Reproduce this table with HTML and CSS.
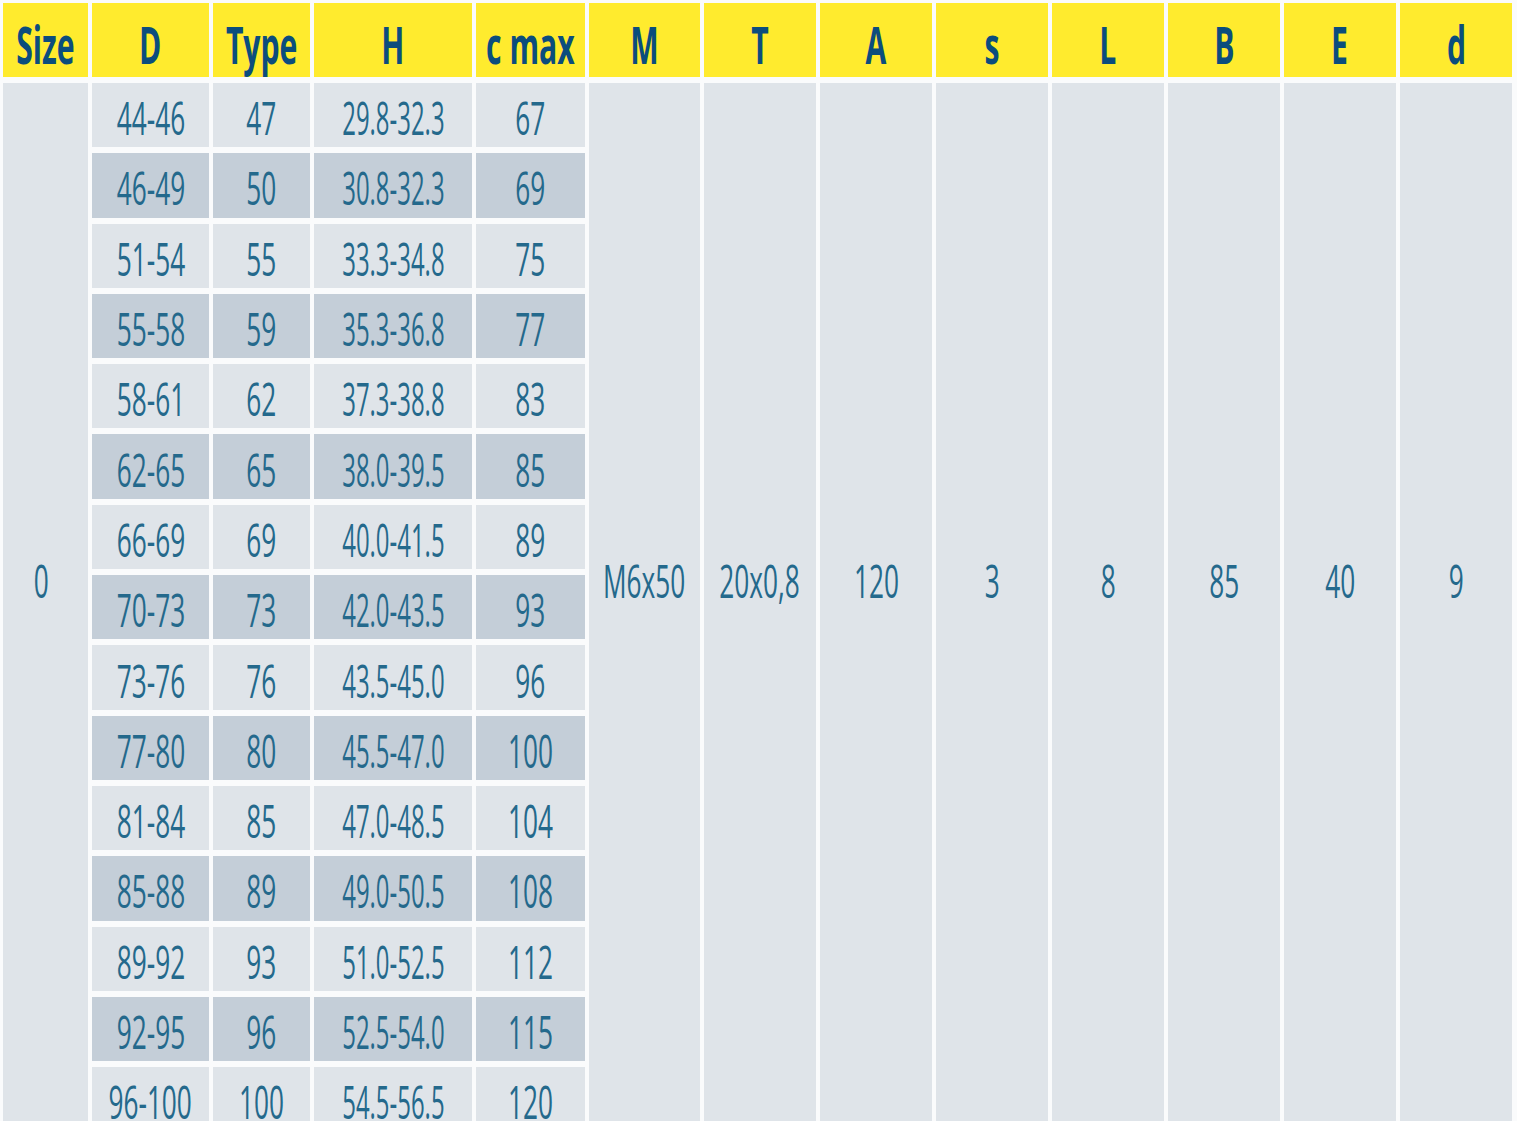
FILE: index.html
```html
<!DOCTYPE html>
<html>
<head>
<meta charset="utf-8">
<link rel="stylesheet" href="styles.css">
</head>
<body>
<div class="table">
  <div class="hd"><span>Size</span></div>
  <div class="hd"><span>D</span></div>
  <div class="hd"><span>Type</span></div>
  <div class="hd"><span>H</span></div>
  <div class="hd"><span>c max</span></div>
  <div class="hd"><span>M</span></div>
  <div class="hd"><span>T</span></div>
  <div class="hd"><span>A</span></div>
  <div class="hd"><span>s</span></div>
  <div class="hd"><span>L</span></div>
  <div class="hd"><span>B</span></div>
  <div class="hd"><span>E</span></div>
  <div class="hd"><span>d</span></div>

  <div class="span c1 size"><span>0</span></div>
  <div class="span c6"><span>M6x50</span></div>
  <div class="span c7"><span>20x0,8</span></div>
  <div class="span c8"><span>120</span></div>
  <div class="span c9"><span>3</span></div>
  <div class="span c10"><span>8</span></div>
  <div class="span c11"><span>85</span></div>
  <div class="span c12"><span>40</span></div>
  <div class="span c13"><span>9</span></div>

  <div class="cell"><span>44-46</span></div><div class="cell"><span>47</span></div><div class="cell h"><span>29.8-32.3</span></div><div class="cell"><span>67</span></div>
  <div class="cell dk"><span>46-49</span></div><div class="cell dk"><span>50</span></div><div class="cell dk h"><span>30.8-32.3</span></div><div class="cell dk"><span>69</span></div>
  <div class="cell"><span>51-54</span></div><div class="cell"><span>55</span></div><div class="cell h"><span>33.3-34.8</span></div><div class="cell"><span>75</span></div>
  <div class="cell dk"><span>55-58</span></div><div class="cell dk"><span>59</span></div><div class="cell dk h"><span>35.3-36.8</span></div><div class="cell dk"><span>77</span></div>
  <div class="cell"><span>58-61</span></div><div class="cell"><span>62</span></div><div class="cell h"><span>37.3-38.8</span></div><div class="cell"><span>83</span></div>
  <div class="cell dk"><span>62-65</span></div><div class="cell dk"><span>65</span></div><div class="cell dk h"><span>38.0-39.5</span></div><div class="cell dk"><span>85</span></div>
  <div class="cell"><span>66-69</span></div><div class="cell"><span>69</span></div><div class="cell h"><span>40.0-41.5</span></div><div class="cell"><span>89</span></div>
  <div class="cell dk"><span>70-73</span></div><div class="cell dk"><span>73</span></div><div class="cell dk h"><span>42.0-43.5</span></div><div class="cell dk"><span>93</span></div>
  <div class="cell"><span>73-76</span></div><div class="cell"><span>76</span></div><div class="cell h"><span>43.5-45.0</span></div><div class="cell"><span>96</span></div>
  <div class="cell dk"><span>77-80</span></div><div class="cell dk"><span>80</span></div><div class="cell dk h"><span>45.5-47.0</span></div><div class="cell dk"><span>100</span></div>
  <div class="cell"><span>81-84</span></div><div class="cell"><span>85</span></div><div class="cell h"><span>47.0-48.5</span></div><div class="cell"><span>104</span></div>
  <div class="cell dk"><span>85-88</span></div><div class="cell dk"><span>89</span></div><div class="cell dk h"><span>49.0-50.5</span></div><div class="cell dk"><span>108</span></div>
  <div class="cell"><span>89-92</span></div><div class="cell"><span>93</span></div><div class="cell h"><span>51.0-52.5</span></div><div class="cell"><span>112</span></div>
  <div class="cell dk"><span>92-95</span></div><div class="cell dk"><span>96</span></div><div class="cell dk h"><span>52.5-54.0</span></div><div class="cell dk"><span>115</span></div>
  <div class="cell"><span>96-100</span></div><div class="cell"><span>100</span></div><div class="cell h"><span>54.5-56.5</span></div><div class="cell"><span>120</span></div>
</div>
</body>
</html>
```

FILE: styles.css
```css
html, body {
  margin: 0;
  padding: 0;
  background: #fafbfc;
  overflow: hidden;
  height: 1121px;
}

.table {
  display: grid;
  grid-template-columns: 85px 117px 97px 158px 109px 111px repeat(7, 112px);
  grid-template-rows: 74px repeat(15, 64.3px);
  column-gap: 4px;
  row-gap: 6px;
  padding: 3px 0 0 3px;
  font-family: "Open Sans", "Noto Sans", sans-serif;
}

.hd {
  background: #ffeb2e;
  color: #0b4d7d;
  font-weight: 700;
  font-size: 52px;
  display: flex;
  align-items: center;
  justify-content: center;
  padding-top: 7px;
  box-sizing: border-box;
  line-height: 1;
  white-space: nowrap;
}

.hd span {
  display: inline-block;
  transform: scaleX(0.58);
}

.cell, .span {
  background: #dfe4e9;
  color: #24698c;
  font-size: 46px;
  display: flex;
  align-items: center;
  justify-content: center;
  line-height: 1;
  white-space: nowrap;
  box-sizing: border-box;
}

.cell {
  padding-top: 4px;
}

.cell span, .span span {
  display: inline-block;
  transform: scaleX(0.57);
}

.cell.h span {
  transform: scaleX(0.52);
}

.cell.dk {
  background: #c4ced8;
}

.span {
  grid-row: 2 / span 15;
  padding-bottom: 54px;
}

.span.size {
  padding-right: 8px;
}

.c1 { grid-column: 1; }
.c6 { grid-column: 6; }
.c7 { grid-column: 7; }
.c8 { grid-column: 8; }
.c9 { grid-column: 9; }
.c10 { grid-column: 10; }
.c11 { grid-column: 11; }
.c12 { grid-column: 12; }
.c13 { grid-column: 13; }
```
